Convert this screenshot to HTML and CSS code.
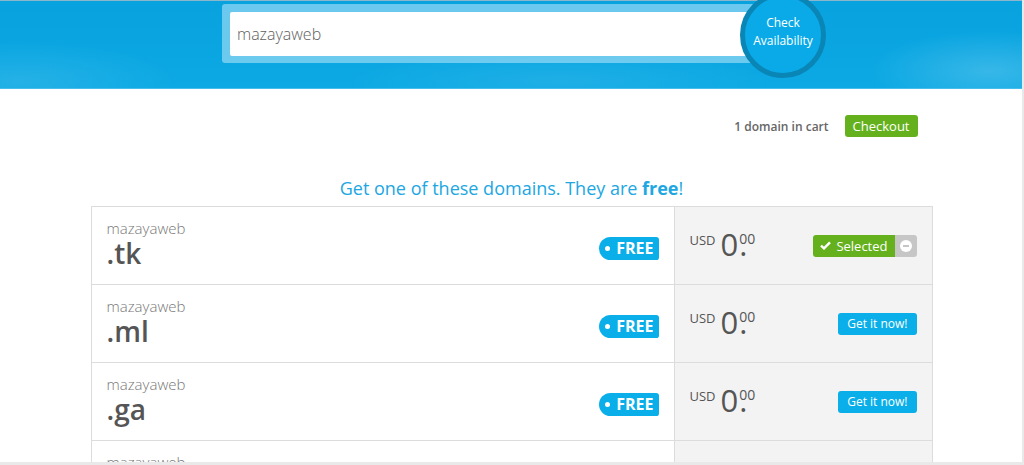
FILE: index.html
```html
<!DOCTYPE html>
<html lang="en">
<head>
    <meta charset="UTF-8">
    <meta name="viewport" content="width=device-width, initial-scale=1.0">
    <title>Find a new Free domain</title>
    <link rel="stylesheet" href="styles.css">
</head>
<body>
    <div class="window">
        <header class="hero">
            <form class="search">
                <div class="search-box">
                    <input type="text" name="domain" value="mazayaweb">
                </div>
                <button type="submit" class="check-btn">Check<br>Availability</button>
            </form>
        </header>

        <main class="content">
            <div class="cart-bar">
                <span class="cart-count">1 domain in cart</span>
                <a href="#" class="btn btn-green">Checkout</a>
            </div>

            <h2 class="title">Get one of these domains. They are <strong>free</strong>!</h2>

            <div class="domains">
                <div class="domain-row">
                    <div class="domain-name">
                        <div class="name">
                            <div class="sld">mazayaweb</div>
                            <div class="tld">.tk</div>
                        </div>
                        <span class="badge-free">FREE</span>
                    </div>
                    <div class="domain-price">
                        <div class="price"><span class="cur">USD</span><span class="amount">0</span><span class="dec"><sup class="cents">00</sup><span class="dot">.</span></span></div>
                        <div class="btn-selected">
                            <span class="sel-main">
                                <svg width="11" height="9" viewBox="0 0 11 9"><path d="M1 4.6 L4 7.4 L10 1.4" fill="none" stroke="#fff" stroke-width="2.4"/></svg>
                                Selected
                            </span>
                            <span class="sel-remove">
                                <svg width="12" height="12" viewBox="0 0 12 12"><circle cx="6" cy="6" r="6" fill="#fff"/><rect x="3" y="5" width="6" height="2" fill="#c6c6c6"/></svg>
                            </span>
                        </div>
                    </div>
                </div>

                <div class="domain-row">
                    <div class="domain-name">
                        <div class="name">
                            <div class="sld">mazayaweb</div>
                            <div class="tld">.ml</div>
                        </div>
                        <span class="badge-free">FREE</span>
                    </div>
                    <div class="domain-price">
                        <div class="price"><span class="cur">USD</span><span class="amount">0</span><span class="dec"><sup class="cents">00</sup><span class="dot">.</span></span></div>
                        <a href="#" class="btn btn-blue">Get it now!</a>
                    </div>
                </div>

                <div class="domain-row">
                    <div class="domain-name">
                        <div class="name">
                            <div class="sld">mazayaweb</div>
                            <div class="tld">.ga</div>
                        </div>
                        <span class="badge-free">FREE</span>
                    </div>
                    <div class="domain-price">
                        <div class="price"><span class="cur">USD</span><span class="amount">0</span><span class="dec"><sup class="cents">00</sup><span class="dot">.</span></span></div>
                        <a href="#" class="btn btn-blue">Get it now!</a>
                    </div>
                </div>

                <div class="domain-row">
                    <div class="domain-name">
                        <div class="name">
                            <div class="sld">mazayaweb</div>
                        </div>
                    </div>
                    <div class="domain-price"></div>
                </div>
            </div>
        </main>
    </div>
</body>
</html>
```

FILE: styles.css
```css
html, body { margin: 0; padding: 0; background: #e9e9e9; }
body { font-family: "Open Sans", "Noto Sans", Arial, sans-serif; color: #555; }

.window { width: 1022px; height: 462px; overflow: hidden; background: #fff; }

/* header */
.hero {
    box-sizing: border-box;
    height: 89px;
    border-top: 1px solid #8cb6cc;
    border-bottom: 1px solid #46bdec;
    background:
        radial-gradient(ellipse 120px 40px at 990px 70px, rgba(255,255,255,0.18), transparent),
        radial-gradient(ellipse 160px 40px at 20px 80px, rgba(255,255,255,0.10), transparent),
        radial-gradient(ellipse 220px 30px at 560px 80px, rgba(255,255,255,0.08), transparent),
        linear-gradient(#08a2df, #0ca9e4);
    padding-top: 3px;
}
.search {
    position: relative;
    width: 578px;
    height: 59px;
    margin: 0 0 0 222px;
    padding: 8px;
    box-sizing: border-box;
    background: rgba(190, 232, 250, 0.55);
    border-radius: 3px;
}
.search-box input {
    display: block;
    width: 100%;
    height: 44px;
    box-sizing: border-box;
    border: none;
    border-radius: 2px;
    padding: 0 7px;
    font-family: inherit;
    font-size: 16px;
    font-weight: 300;
    color: #5e5e5e;
    outline: none;
}
.check-btn {
    position: absolute;
    left: 518px;
    top: -12px;
    width: 86px;
    height: 86px;
    border-radius: 50%;
    border: 5px solid #0986b6;
    background: #0aaae8;
    color: #fff;
    font-family: inherit;
    font-size: 12px;
    line-height: 18px;
    padding: 0 0 6px;
    cursor: pointer;
}

/* content */
.content { width: 842px; margin: 0 auto; padding-left: 1px; }
.cart-bar {
    display: flex;
    justify-content: flex-end;
    align-items: center;
    gap: 16px;
    padding: 26px 15px 0 0;
}
.cart-count { font-size: 12px; font-weight: 600; color: #666; }
.btn {
    display: inline-block;
    height: 22px;
    line-height: 22px;
    padding: 0 8px;
    border-radius: 3px;
    color: #fff;
    text-decoration: none;
    font-size: 13px;
}
.btn-green { background: #64b11d; }
.btn-blue { background: #0aaee8; font-size: 12px; padding: 0 9px; }

.title {
    margin: 39px 0 6px;
    text-align: center;
    font-size: 18px;
    font-weight: 400;
    color: #20a7e2;
    line-height: 24px;
}
.title strong { font-weight: 700; }

.domains { border: 1px solid #dcdcdc; border-bottom: none; }
.domain-row {
    display: grid;
    grid-template-columns: 582px 1fr;
    box-sizing: border-box;
    height: 78px;
    border-bottom: 1px solid #dcdcdc;
}
.domain-name {
    display: flex;
    justify-content: space-between;
    align-items: center;
    padding: 0 15px;
}
.name { align-self: flex-start; padding-top: 11px; }
.sld { font-size: 15px; font-weight: 300; color: #777; line-height: 20px; }
.tld { font-size: 28px; font-weight: 600; color: #555; line-height: 30px; }
.badge-free {
    position: relative;
    background: #0aaee8;
    color: #fff;
    font-weight: 700;
    font-size: 16px;
    line-height: 23px;
    padding: 0 5px 0 17px;
    border-radius: 12px 3px 3px 12px;
    margin-top: 6px;
}
.badge-free::before {
    content: "";
    position: absolute;
    left: 6px;
    top: 9px;
    width: 5px;
    height: 5px;
    border-radius: 50%;
    background: #fff;
}

.domain-price {
    background: #f3f3f3;
    border-left: 1px solid #dcdcdc;
    display: flex;
    justify-content: space-between;
    align-items: center;
    padding: 0 15px;
}
.price { display: flex; align-items: flex-start; color: #555; margin-top: -3px; }
.cur { font-size: 13px; font-weight: 400; margin: 4px 5px 0 0; }
.amount { font-size: 31px; line-height: 34px; }
.dec { display: flex; flex-direction: column; align-items: flex-start; margin-left: 1px; }
.cents { font-size: 14px; line-height: 14px; margin-top: 5px; }
.dot { font-size: 31px; line-height: 12px; margin-top: -8px; }

.btn-selected { display: flex; height: 22px; border-radius: 3px; overflow: hidden; }
.sel-main {
    display: flex;
    align-items: center;
    gap: 5px;
    background: #64b11d;
    color: #fff;
    font-size: 13px;
    padding: 0 7px;
}
.sel-remove {
    display: flex;
    align-items: center;
    justify-content: center;
    width: 22px;
    background: #c6c6c6;
}
```
